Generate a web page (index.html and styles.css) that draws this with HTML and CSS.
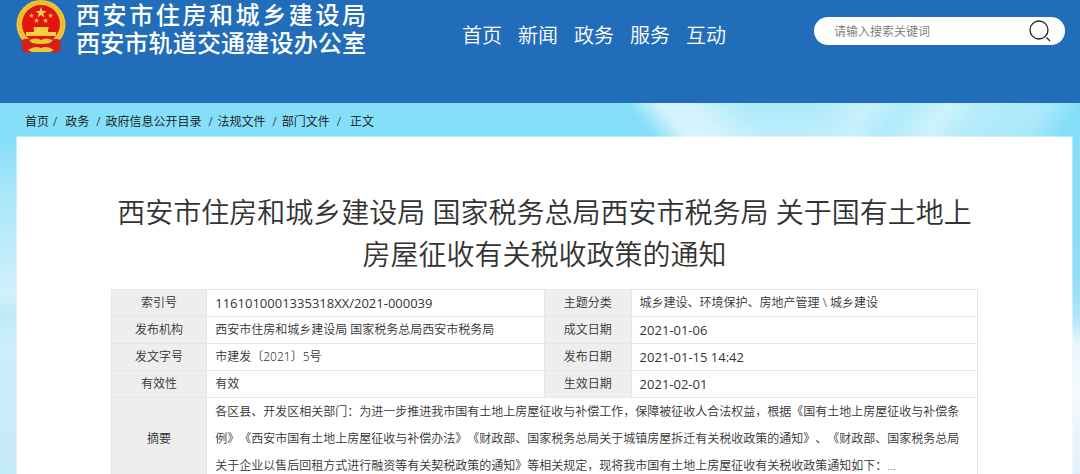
FILE: index.html
```html
<!DOCTYPE html>
<html lang="zh-CN">

<head>
    <meta charset="UTF-8">
    <meta name="viewport" content="width=device-width, initial-scale=1.0">
    <title>西安市住房和城乡建设局</title>
    <link rel="stylesheet" href="styles.css">
</head>

<body>
    <header class="header">
        <a class="logo" href="#">
            <svg class="emblem" viewBox="0 0 50 54" aria-hidden="true">
                <path d="M7 34 L6 51 L14 53 L17 50 L33 50 L37 53 L45 51 L43 34 Z" fill="#d3201b" />
                <circle cx="25" cy="24.5" r="24.5" fill="#f0c534" />
                <circle cx="25" cy="24.5" r="22" fill="none" stroke="#dfa525" stroke-width="1" stroke-dasharray="2 2" />
                <circle cx="25" cy="24" r="19" fill="#e5130f" />
                <polygon points="25,7 26.4,11 30.5,11 27.2,13.5 28.4,17.5 25,15 21.6,17.5 22.8,13.5 19.5,11 23.6,11" fill="#f9d94a" />
                <g fill="#f6cf45">
                    <path id="star" d="M15.500 13 l.7 1.800 h1.900 l-1.500 1.200 .6 1.900 -1.700 -1.100 -1.700 1.100 .6 -1.900 -1.500 -1.200 h1.900 z" />
                    <use href="#star" x="19" />
                    <use href="#star" x="5" y="5" />
                    <use href="#star" x="14" y="5" />
                </g>
                <path d="M18 27 h14 l1 2 h-1 v3 h8 v4 H10 v-4 h8 v-3 h-1 z" fill="#f6cf45" />
                <path d="M5 40 Q15 37 25 41 Q35 37 45 40 L44 47 Q25 50 6 47 Z" fill="#d3201b" />
                <path d="M13 40 Q20 37 25 40 Q30 37 37 40 L34 43 Q25 45 16 43 Z" fill="#f0c534" />
                <path d="M12 50 Q19 45 25 48 Q31 45 38 50 L34 52 H16 Z" fill="#f0c534" />
            </svg>
            <span class="names">
                <span class="name">西安市住房和城乡建设局</span>
                <span class="name">西安市轨道交通建设办公室</span>
            </span>
        </a>
        <nav class="nav">
            <a href="#">首页</a>
            <a href="#">新闻</a>
            <a href="#">政务</a>
            <a href="#">服务</a>
            <a href="#">互动</a>
        </nav>
        <form class="search">
            <input type="text" placeholder="请输入搜索关键词" aria-label="请输入搜索关键词">
            <button type="submit" aria-label="搜索">
                <svg viewBox="0 0 24 24" aria-hidden="true">
                    <circle cx="11" cy="11" r="9" />
                    <path d="M18.500 18.500 L22 22" />
                </svg>
            </button>
        </form>
    </header>

    <main class="page">
        <nav class="crumbs">
            <a href="#">首页</a><i class="first">/</i>
            <a href="#">政务</a><i>/</i>
            <a href="#">政府信息公开目录</a><i>/</i>
            <a href="#">法规文件</a><i>/</i>
            <a href="#">部门文件</a><i>/</i>
            <a class="current" href="#">正文</a>
        </nav>

        <article class="article">
            <h1>西安市住房和城乡建设局 国家税务总局西安市税务局 关于国有土地上房屋征收有关税收政策的通知</h1>
            <table class="info">
                <colgroup>
                    <col class="col-label">
                    <col class="col-value">
                    <col class="col-label2">
                    <col>
                </colgroup>
                <tr>
                    <th scope="row">索引号</th>
                    <td class="num">1161010001335318XX/2021-000039</td>
                    <th scope="row">主题分类</th>
                    <td>城乡建设、环境保护、房地产管理 \ 城乡建设</td>
                </tr>
                <tr>
                    <th scope="row">发布机构</th>
                    <td>西安市住房和城乡建设局 国家税务总局西安市税务局</td>
                    <th scope="row">成文日期</th>
                    <td class="num">2021-01-06</td>
                </tr>
                <tr>
                    <th scope="row">发文字号</th>
                    <td>市建发〔2021〕5号</td>
                    <th scope="row">发布日期</th>
                    <td class="num">2021-01-15 14:42</td>
                </tr>
                <tr>
                    <th scope="row">有效性</th>
                    <td>有效</td>
                    <th scope="row">生效日期</th>
                    <td class="num">2021-02-01</td>
                </tr>
                <tr>
                    <th scope="row">摘要</th>
                    <td class="summary" colspan="3">各区县、开发区相关部门：为进一步推进我市国有土地上房屋征收与补偿工作，保障被征收人合法权益，根据《国有土地上房屋征收与补偿条例》《西安市国有土地上房屋征收与补偿办法》《财政部、国家税务总局关于城镇房屋拆迁有关税收政策的通知》、《财政部、国家税务总局关于企业以售后回租方式进行融资等有关契税政策的通知》等相关规定，现将我市国有土地上房屋征收有关税收政策通知如下：...</td>
                </tr>
            </table>
        </article>
    </main>
</body>

</html>
```
FILE: styles.css
```css
* {
    box-sizing: border-box;
}

body {
    margin: 0;
    font-family: "Noto Sans", "Noto Sans CJK SC", sans-serif;
    font-size: 12px;
    font-weight: 350;
    color: #333;
    text-spacing-trim: space-all;
}

a {
    color: inherit;
    text-decoration: none;
}

.header {
    display: flex;
    align-items: flex-start;
    min-height: 103px;
    padding: 0 15px 0 16px;
    background-color: #226db9;
    color: #fff;
}

.logo {
    display: flex;
    gap: 10px;
}

.emblem {
    width: 50px;
    height: 54px;
}

.names {
    width: 290px;
    font-family: "Noto Sans CJK SC", sans-serif;
    font-size: 24px;
    font-weight: 500;
    line-height: 28px;
}

.name {
    display: block;
    text-align: justify;
    text-align-last: justify;
}

.nav {
    display: flex;
    gap: 16px;
    margin-left: 96px;
    padding-top: 20px;
    font-size: 20px;
    line-height: 32px;
}

.search {
    display: flex;
    align-items: center;
    width: 251px;
    height: 28px;
    margin: 17px 0 0 auto;
    padding: 0 13px 0 20px;
    border-radius: 14px;
    background-color: #fff;
}

.search input {
    flex: 1;
    min-width: 0;
    padding: 0;
    border: none;
    outline: none;
    background: none;
    font: inherit;
}

.search input::placeholder {
    color: #777;
}

.search button {
    display: flex;
    padding: 0;
    border: none;
    background: none;
    cursor: pointer;
}

.search svg {
    width: 24px;
    height: 24px;
    fill: none;
    stroke: #222;
    stroke-width: 1.3;
}

/* sky: light rays along the top, then the left and right edges */
.page {
    padding: 0 8px 0 17px;
    background:
        linear-gradient(50deg, transparent 59%, rgba(255, 255, 255, 0.65) 62%, rgba(255, 255, 255, 0.6) 65%, rgba(255, 255, 255, 0.25) 69%, transparent 76%) top / 100% 34px no-repeat,
        linear-gradient(125deg, transparent 62%, rgba(255, 255, 255, 0.35) 74%, rgba(255, 255, 255, 0.55) 79%, rgba(255, 255, 255, 0.35) 82%, rgba(255, 255, 255, 0.6) 86%, rgba(255, 255, 255, 0.4) 89%, rgba(255, 255, 255, 0.3) 95%, transparent 98%) top / 100% 34px no-repeat,
        linear-gradient(to bottom, #85dff9 34px, #8bdef7 170px, #b0e6f8 215px, #e8f6fc 240px, #f4f9fd 290px, #e3f0f9 370px) right / 50% 100% no-repeat,
        linear-gradient(to bottom, #85dff9 34px, #a5e6fa 80px, #d0f0fb 190px, #bfe9f9 215px, #cdeefa 240px, #c5eaf8 370px);
}

.crumbs {
    display: flex;
    align-items: center;
    height: 34px;
    padding: 2px 0 0 8px;
    color: #111;
}

.crumbs i {
    padding: 0 5px 0 7px;
    font-style: normal;
}

.crumbs .first {
    padding: 0 8px 0 4px;
}

.crumbs .current {
    padding-left: 4px;
}

.article {
    padding: 54px 94px 0;
    background-color: #fff;
    box-shadow: 0 0 0 1px rgba(255, 255, 255, 0.4);
}

.article h1 {
    margin: 0 0 14px;
    font-size: 28px;
    font-weight: 350;
    line-height: 42px;
    text-align: center;
    color: #333;
}

.info {
    width: 100%;
    border-collapse: collapse;
    table-layout: fixed;
}

.col-label {
    width: 11%;
}

.col-value {
    width: 39%;
}

.col-label2 {
    width: 10%;
}

.info th,
.info td {
    height: 27px;
    padding: 0 8px;
    border: 1px solid #e6e6e6;
    line-height: 26px;
}

.info th {
    background-color: #eee;
    font-weight: 350;
    text-align: center;
}

.info .num {
    font-family: "Open Sans", sans-serif;
    font-weight: 400;
    font-size: 13px;
    line-height: 24px;
}

.info .summary {
    padding-right: 16px;
    line-height: 27px;
}
```
